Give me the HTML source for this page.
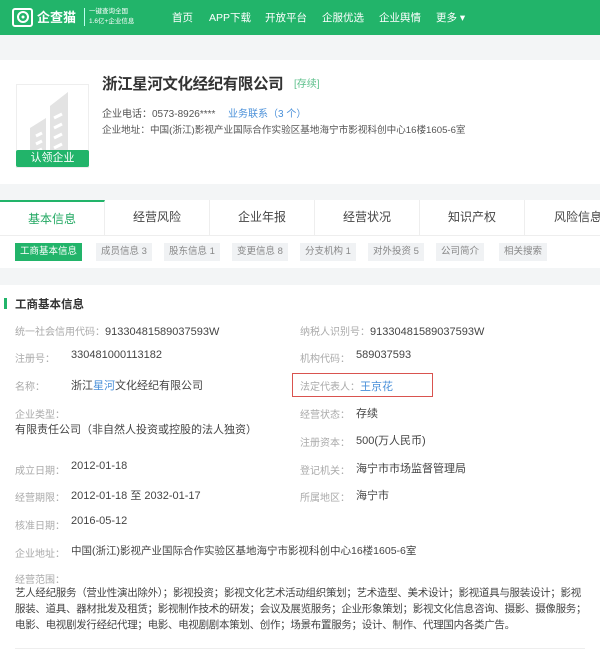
<!DOCTYPE html>
<html><head><meta charset="utf-8"><style>
*{margin:0;padding:0;box-sizing:border-box}
body{width:600px;height:655px;overflow:hidden;background:#f3f5f6;font-family:"Liberation Sans","Noto Sans CJK SC",sans-serif;color:#333;position:relative}
.a{position:absolute;white-space:nowrap}
.hd{left:0;top:0;width:600px;height:35px;background:#22b46a}
.nav{color:#fff;font-size:10.5px;top:10px}
.lbl{color:#aaa;font-size:10px}
.v{color:#444;font-size:11px}
.tab{top:200px;height:35px;width:105px;text-align:center;line-height:35px;font-size:12px;color:#444;border-right:1px solid #eee;background:#fff}
.st{top:243px;height:18px;line-height:18px;font-size:9.5px;color:#888;background:#f0f2f4;padding:0 5px}
</style></head><body>
<div class="a hd"></div>
<svg class="a" style="left:12px;top:6px" width="22" height="22" viewBox="0 0 22 22"><rect x="1" y="3" width="19" height="17" rx="2" fill="none" stroke="#fff" stroke-width="2"/><circle cx="11" cy="11" r="5" fill="none" stroke="#fff" stroke-width="2"/><circle cx="11" cy="11" r="1.5" fill="#fff"/></svg>
<div class="a" style="left:37px;top:7px;color:#fff;font-size:13px;font-weight:bold">企查猫</div>
<div class="a" style="left:84px;top:8px;width:1px;height:18px;background:#bfe"></div>
<div class="a" style="left:89px;top:7px;color:#fff;font-size:6.5px;line-height:10px">一键查询全国<br>1.6亿+企业信息</div>
<div class="a nav" style="left:172px">首页</div>
<div class="a nav" style="left:209px">APP下载</div>
<div class="a nav" style="left:265px">开放平台</div>
<div class="a nav" style="left:322px">企服优选</div>
<div class="a nav" style="left:379px">企业舆情</div>
<div class="a nav" style="left:436px">更多 ▾</div>

<div class="a" style="left:0;top:60px;width:600px;height:124px;background:#fff"></div>
<div class="a" style="left:16px;top:84px;width:73px;height:84px;border:1px solid #eee;background:#fff"></div>
<svg class="a" style="left:24px;top:88px" width="60" height="76" viewBox="0 0 60 76"><path d="M6 76V40L22 30V76ZM26 76V18L44 4V76Z" fill="#e3e3e3"/><path d="M12 48l6-3M12 56l6-3M12 64l6-3M30 30l8-4M30 40l8-4M30 50l8-4M30 60l8-4" stroke="#fff" stroke-width="3"/></svg>
<div class="a" style="left:16px;top:150px;width:73px;height:17px;background:#22b46a;color:#fff;font-size:11px;text-align:center;line-height:17px;border-radius:2px">认领企业</div>
<div class="a" style="left:102px;top:72px;font-size:15.5px;letter-spacing:-0.4px;font-weight:bold;color:#333">浙江星河文化经纪有限公司</div>
<div class="a" style="left:294px;top:75px;font-size:10px;color:#5bbf8a">[存续]</div>
<div class="a" style="left:102px;top:105px;font-size:10px;color:#555">企业电话：0573-8926****</div>
<div class="a" style="left:228px;top:105px;font-size:10px;color:#4a90d9">业务联系（3 个）</div>
<div class="a" style="left:102px;top:122px;font-size:9.6px;color:#555">企业地址：中国(浙江)影视产业国际合作实验区基地海宁市影视科创中心16楼1605-6室</div>

<div class="a" style="left:0;top:200px;width:600px;height:68px;background:#fff"></div>
<div class="a tab" style="left:0;color:#22a862;border-top:2px solid #22b46a">基本信息</div>
<div class="a tab" style="left:105px">经营风险</div>
<div class="a tab" style="left:210px">企业年报</div>
<div class="a tab" style="left:315px">经营状况</div>
<div class="a tab" style="left:420px">知识产权</div>
<div class="a tab" style="left:525px;width:80px;text-align:right;padding-right:2px">风险信息</div>
<div class="a" style="left:0;top:235px;width:600px;height:1px;background:#eee"></div>
<div class="a st" style="left:15px;background:#22b46a;color:#fff">工商基本信息</div>
<div class="a st" style="left:96px">成员信息 3</div>
<div class="a st" style="left:164px">股东信息 1</div>
<div class="a st" style="left:232px">变更信息 8</div>
<div class="a st" style="left:300px">分支机构 1</div>
<div class="a st" style="left:368px">对外投资 5</div>
<div class="a st" style="left:436px">公司简介</div>
<div class="a st" style="left:499px">相关搜索</div>

<div class="a" style="left:0;top:285px;width:600px;height:370px;background:#fff"></div>
<div class="a" style="left:4px;top:298px;width:3px;height:11px;background:#22b46a"></div>
<div class="a" style="left:15px;top:296px;font-size:11.5px;font-weight:bold;color:#333">工商基本信息</div>

<div class="a lbl" style="left:15px;top:323px">统一社会信用代码：<span class="v">91330481589037593W</span></div>
<div class="a lbl" style="left:300px;top:323px">纳税人识别号：<span class="v">91330481589037593W</span></div>
<div class="a lbl" style="left:15px;top:350px">注册号：</div><div class="a v" style="left:71px;top:349px">330481000113182</div>
<div class="a lbl" style="left:300px;top:350px">机构代码：</div><div class="a v" style="left:356px;top:349px">589037593</div>
<div class="a lbl" style="left:15px;top:378px">名称：</div><div class="a v" style="left:71px;top:377px">浙江<span style="color:#4a90d9">星河</span>文化经纪有限公司</div>
<div class="a" style="left:292px;top:373px;width:141px;height:24px;border:1px solid #d9534f"></div>
<div class="a lbl" style="left:300px;top:378px">法定代表人：<span style="color:#4a90d9;font-size:11px">王京花</span></div>
<div class="a lbl" style="left:15px;top:406px">企业类型：</div>
<div class="a v" style="left:15px;top:421px">有限责任公司（非自然人投资或控股的法人独资）</div>
<div class="a lbl" style="left:300px;top:406px">经营状态：</div><div class="a v" style="left:356px;top:405px">存续</div>
<div class="a lbl" style="left:300px;top:434px">注册资本：</div><div class="a v" style="left:356px;top:432px">500(万人民币)</div>
<div class="a lbl" style="left:15px;top:462px">成立日期：</div><div class="a v" style="left:71px;top:460px">2012-01-18</div>
<div class="a lbl" style="left:300px;top:462px">登记机关：</div><div class="a v" style="left:356px;top:460px">海宁市市场监督管理局</div>
<div class="a lbl" style="left:15px;top:489px">经营期限：</div><div class="a v" style="left:71px;top:487px">2012-01-18 至 2032-01-17</div>
<div class="a lbl" style="left:300px;top:489px">所属地区：</div><div class="a v" style="left:356px;top:487px">海宁市</div>
<div class="a lbl" style="left:15px;top:517px">核准日期：</div><div class="a v" style="left:71px;top:515px">2016-05-12</div>
<div class="a lbl" style="left:15px;top:545px">企业地址：</div><div class="a v" style="left:71px;top:543px;font-size:10.5px">中国(浙江)影视产业国际合作实验区基地海宁市影视科创中心16楼1605-6室</div>
<div class="a lbl" style="left:15px;top:571px">经营范围：</div>
<div class="a v" style="left:15px;top:585px;width:575px;white-space:normal;font-size:10.5px;line-height:16px;letter-spacing:-0.3px">艺人经纪服务（营业性演出除外）；影视投资；影视文化艺术活动组织策划；艺术造型、美术设计；影视道具与服装设计；影视服装、道具、器材批发及租赁；影视制作技术的研发；会议及展览服务；企业形象策划；影视文化信息咨询、摄影、摄像服务；电影、电视剧发行经纪代理；电影、电视剧剧本策划、创作；场景布置服务；设计、制作、代理国内各类广告。</div>
<div class="a" style="left:15px;top:648px;width:570px;height:1px;background:#eee"></div>
</body></html>
